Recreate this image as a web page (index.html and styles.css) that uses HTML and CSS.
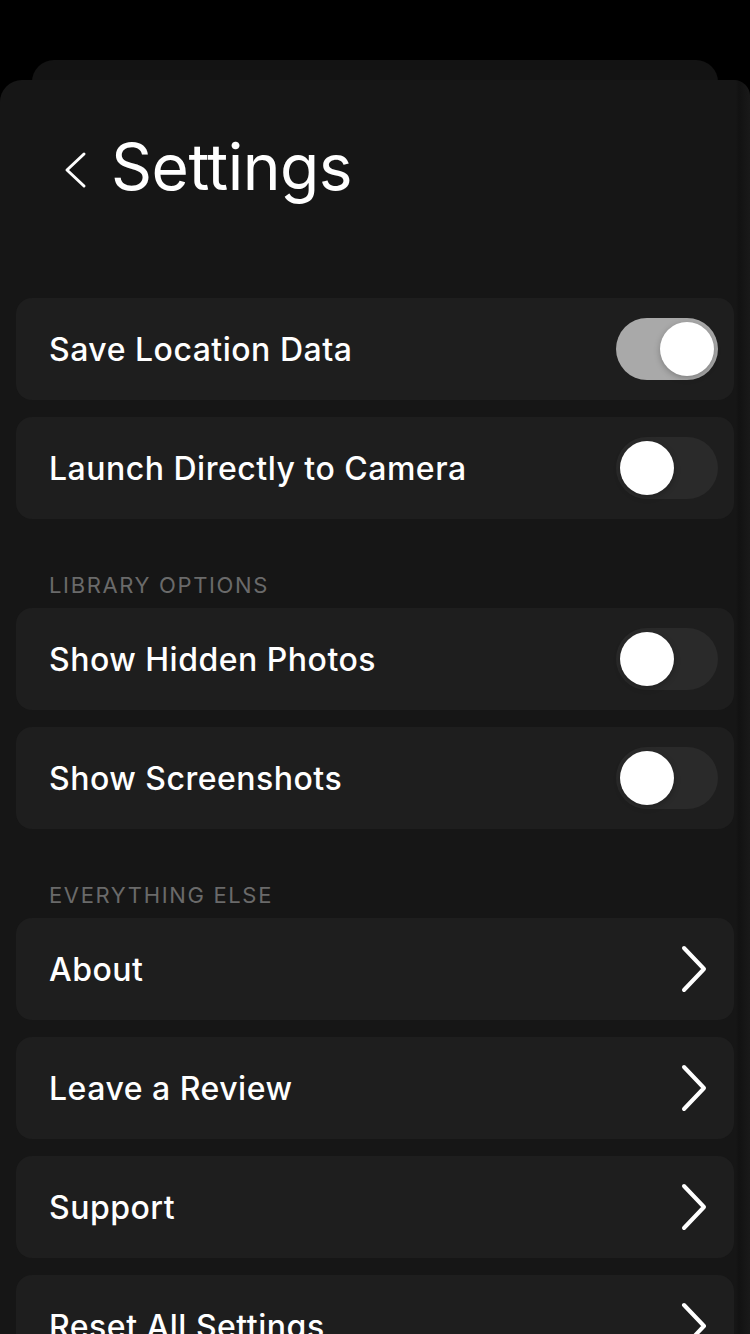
FILE: index.html
```html
<!DOCTYPE html>
<html lang="en">
<head>
    <meta charset="UTF-8">
    <meta name="viewport" content="width=device-width, initial-scale=1.0">
    <title>Settings</title>
    <link rel="stylesheet" href="styles.css">
</head>
<body>
    <div class="backSheet"></div>
    <div class="sheet">
        <div class="header">
            <svg class="backIcon" width="26" height="38" viewBox="0 0 26 38">
                <path d="M22 3 L5 19 L22 35" fill="none" stroke="#fff" stroke-width="3" stroke-linecap="round" stroke-linejoin="round"/>
            </svg>
            <h1 class="title">Settings</h1>
        </div>

        <div class="group">
            <div class="row">
                <span class="rowText">Save Location Data</span>
                <div class="toggle on"><div class="thumb"></div></div>
            </div>
            <div class="row">
                <span class="rowText">Launch Directly to Camera</span>
                <div class="toggle"><div class="thumb"></div></div>
            </div>
        </div>

        <p class="sectionLabel">LIBRARY OPTIONS</p>
        <div class="group">
            <div class="row">
                <span class="rowText">Show Hidden Photos</span>
                <div class="toggle"><div class="thumb"></div></div>
            </div>
            <div class="row">
                <span class="rowText">Show Screenshots</span>
                <div class="toggle"><div class="thumb"></div></div>
            </div>
        </div>

        <p class="sectionLabel">EVERYTHING ELSE</p>
        <div class="group">
            <div class="row">
                <span class="rowText">About</span>
                <svg class="chevron" width="30" height="48" viewBox="0 0 30 48"><path d="M6 3 L26 24 L6 45" fill="none" stroke="#fff" stroke-width="4" stroke-linecap="round" stroke-linejoin="round"/></svg>
            </div>
            <div class="row">
                <span class="rowText">Leave a Review</span>
                <svg class="chevron" width="30" height="48" viewBox="0 0 30 48"><path d="M6 3 L26 24 L6 45" fill="none" stroke="#fff" stroke-width="4" stroke-linecap="round" stroke-linejoin="round"/></svg>
            </div>
            <div class="row">
                <span class="rowText">Support</span>
                <svg class="chevron" width="30" height="48" viewBox="0 0 30 48"><path d="M6 3 L26 24 L6 45" fill="none" stroke="#fff" stroke-width="4" stroke-linecap="round" stroke-linejoin="round"/></svg>
            </div>
            <div class="row">
                <span class="rowText">Reset All Settings</span>
                <svg class="chevron" width="30" height="48" viewBox="0 0 30 48"><path d="M6 3 L26 24 L6 45" fill="none" stroke="#fff" stroke-width="4" stroke-linecap="round" stroke-linejoin="round"/></svg>
            </div>
        </div>
    </div>
</body>
</html>
```

FILE: styles.css
```css
body{
    margin: 0;
    width: 750px;
    height: 1334px;
    overflow: hidden;
    background: #000;
    font-family: Inter, "Liberation Sans", sans-serif;
    color: #fff;
}
.backSheet{
    margin: 60px 32px 0 32px;
    height: 40px;
    background: #131313;
    border-radius: 22px 22px 0 0;
}
.sheet{
    margin-top: -20px;
    height: 1400px;
    background: linear-gradient(to right, #161616 calc(100% - 14px), #121212 calc(100% - 11px), #191919 100%);
    border-radius: 22px 16px 0 0;
    padding: 0 16px;
}
.header{
    height: 218px;
    box-sizing: border-box;
    padding: 47px 0 0 46px;
    display: flex;
    align-items: flex-start;
}
.backIcon{
    margin-top: 24px;
    margin-right: 23px;
}
.title{
    margin: 0;
    font-size: 64px;
    font-weight: 400;
    line-height: 80px;
    letter-spacing: -0.5px;
}
.group{
    display: flex;
    flex-direction: column;
    gap: 17px;
}
.row{
    height: 102px;
    background: #1e1e1e;
    border-radius: 16px;
    padding: 0 16px 0 33px;
    display: flex;
    justify-content: space-between;
    align-items: center;
}
.rowText{
    font-size: 32px;
    font-weight: 500;
    letter-spacing: 0.5px;
}
.toggle{
    width: 102px;
    height: 62px;
    border-radius: 31px;
    background: #2a2a2a;
    display: flex;
    align-items: center;
    padding: 0 4px;
    box-sizing: border-box;
}
.toggle .thumb{
    width: 54px;
    height: 54px;
    border-radius: 50%;
    background: #fff;
    box-shadow: 0 2px 6px rgba(0,0,0,0.25);
}
.toggle.on{
    background: #a9a9a9;
    justify-content: flex-end;
}
.chevron{
    margin-right: 10px;
}
.sectionLabel{
    margin: 0;
    height: 89px;
    box-sizing: border-box;
    padding: 52px 0 0 33px;
    font-size: 22px;
    line-height: 28px;
    letter-spacing: 1.65px;
    color: #6a6a6a;
}
```
